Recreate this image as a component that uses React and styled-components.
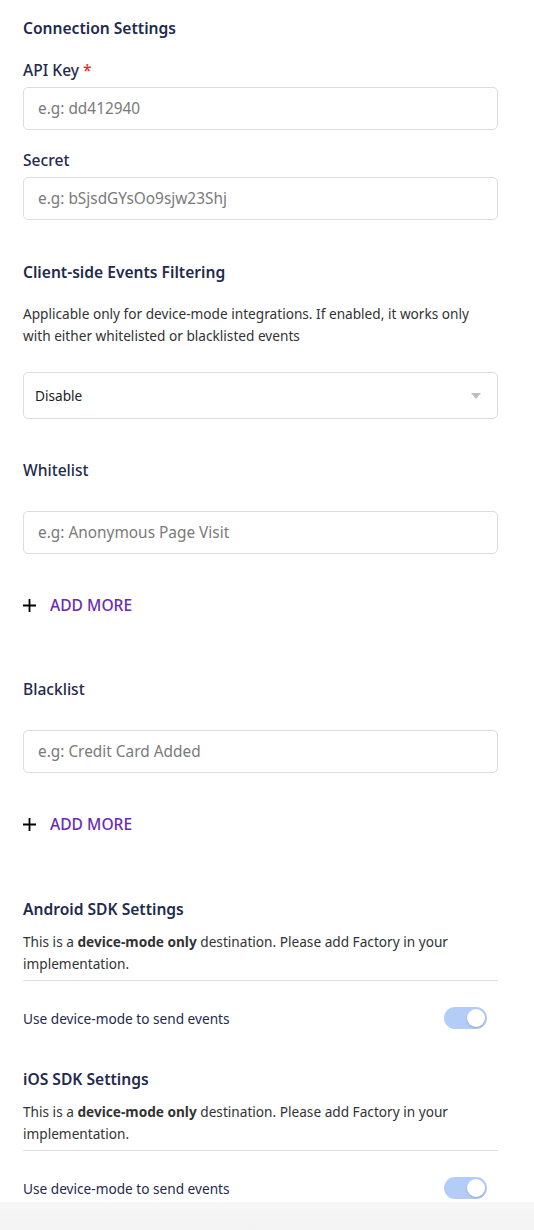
import styled, { createGlobalStyle } from 'styled-components'

const GlobalStyle = createGlobalStyle`
  * { box-sizing: border-box; }
  body {
    margin: 0;
    background: #fff;
    font-family: "Noto Sans", "Open Sans", sans-serif;
  }
`

const Page = styled.div`
  width: 534px;
  height: 1230px;
  display: flex;
  flex-direction: column;
  overflow: hidden;
`

const Form = styled.div`
  flex: 1;
  min-height: 0;
  overflow: hidden;
  padding: 16px 36px 0 23px;
  display: flex;
  flex-direction: column;
`

const Footer = styled.div`
  height: 28px;
  flex-shrink: 0;
  background: linear-gradient(#f7f7f7, #f3f3f3);
`

const SectionTitle = styled.h2`
  margin: 0 0 ${p => p.$gap || 0}px;
  font-size: 15.6px;
  line-height: 24px;
  font-weight: 600;
  color: #1f2a4d;
`

const Label = styled.div`
  font-size: 15.6px;
  line-height: 22px;
  font-weight: 500;
  color: #1f2a4d;
  margin-bottom: ${p => p.$gap || 6}px;

  span {
    color: #f5222d;
  }
`

const Input = styled.input`
  display: block;
  flex-shrink: 0;
  width: 100%;
  height: 43px;
  padding: 0 14px;
  border: 1px solid #dcdcdc;
  border-radius: 5px;
  font-family: inherit;
  font-size: 15.4px;
  color: #333;
  margin-bottom: ${p => p.$gap || 0}px;
  outline: none;

  &::placeholder {
    color: #7a7a7a;
  }
`

const Description = styled.p`
  margin: 0 0 ${p => p.$gap || 0}px;
  font-size: 13.65px;
  line-height: 22px;
  color: #333;

  b {
    font-weight: 700;
  }
`

const Select = styled.div`
  flex-shrink: 0;
  height: 47px;
  border: 1px solid #dcdcdc;
  border-radius: 5px;
  display: flex;
  align-items: center;
  justify-content: space-between;
  padding: 0 16px 0 11px;
  font-size: 13.65px;
  color: #222;
  margin-bottom: 40px;
`

const Caret = styled.span`
  width: 0;
  height: 0;
  border-left: 5px solid transparent;
  border-right: 5px solid transparent;
  border-top: 6px solid #bdbdbd;
  margin-top: 1px;
`

const AddMore = styled.button`
  display: flex;
  align-items: center;
  align-self: flex-start;
  flex-shrink: 0;
  gap: 14px;
  padding: 0;
  border: none;
  background: none;
  font-family: inherit;
  font-size: 15.6px;
  font-weight: 500;
  color: #6a2bb4;
  cursor: pointer;
  height: 24px;
  margin: 39px 0 ${p => p.$gap || 0}px;
`

const Divider = styled.hr`
  flex-shrink: 0;
  margin: 5px 0 0;
  border: none;
  border-top: 1px solid #dedede;
`

const ToggleRow = styled.div`
  display: flex;
  flex-shrink: 0;
  align-items: center;
  justify-content: space-between;
  height: 74px;
  font-size: 13.65px;
  color: #1f2a4d;
  margin-bottom: ${p => p.$gap || 0}px;
`

const Toggle = styled.span`
  position: relative;
  width: 43px;
  height: 22px;
  border-radius: 11px;
  background: #b4cdf8;
  flex-shrink: 0;
  margin-right: 11px;

  &::after {
    content: '';
    position: absolute;
    top: 2px;
    right: 2px;
    width: 18px;
    height: 18px;
    border-radius: 50%;
    background: #fff;
    box-shadow: 0 1px 2px rgba(0, 0, 0, 0.2);
  }
`

const PlusIcon = () => (
  <svg width="13" height="13" viewBox="0 0 13 13">
    <path d="M6.5 0v13M0 6.5h13" stroke="#000" strokeWidth="1.8" />
  </svg>
)

function SdkSection({ title, gap }) {
  return (
    <>
      <SectionTitle $gap={10}>{title}</SectionTitle>
      <Description>
        This is a <b>device-mode only</b> destination. Please add Factory in your implementation.
      </Description>
      <Divider />
      <ToggleRow $gap={gap}>
        Use device-mode to send events
        <Toggle />
      </ToggleRow>
    </>
  )
}

export default function App() {
  return (
    <Page>
      <GlobalStyle />
      <Form>
        <SectionTitle $gap={19}>Connection Settings</SectionTitle>
        <Label>API Key <span>*</span></Label>
        <Input placeholder="e.g: dd412940" $gap={19} />
        <Label>Secret</Label>
        <Input placeholder="e.g: bSjsdGYsOo9sjw23Shj" $gap={40} />

        <SectionTitle $gap={19}>Client-side Events Filtering</SectionTitle>
        <Description $gap={25}>
          Applicable only for device-mode integrations. If enabled, it works only with either whitelisted or blacklisted events
        </Description>
        <Select>
          Disable
          <Caret />
        </Select>

        <Label $gap={30}>Whitelist</Label>
        <Input placeholder="e.g: Anonymous Page Visit" />
        <AddMore $gap={61}><PlusIcon />ADD MORE</AddMore>

        <Label $gap={30}>Blacklist</Label>
        <Input placeholder="e.g: Credit Card Added" />
        <AddMore $gap={61}><PlusIcon />ADD MORE</AddMore>

        <SdkSection title="Android SDK Settings" gap={12} />
        <SdkSection title="iOS SDK Settings" />
      </Form>
      <Footer />
    </Page>
  )
}
